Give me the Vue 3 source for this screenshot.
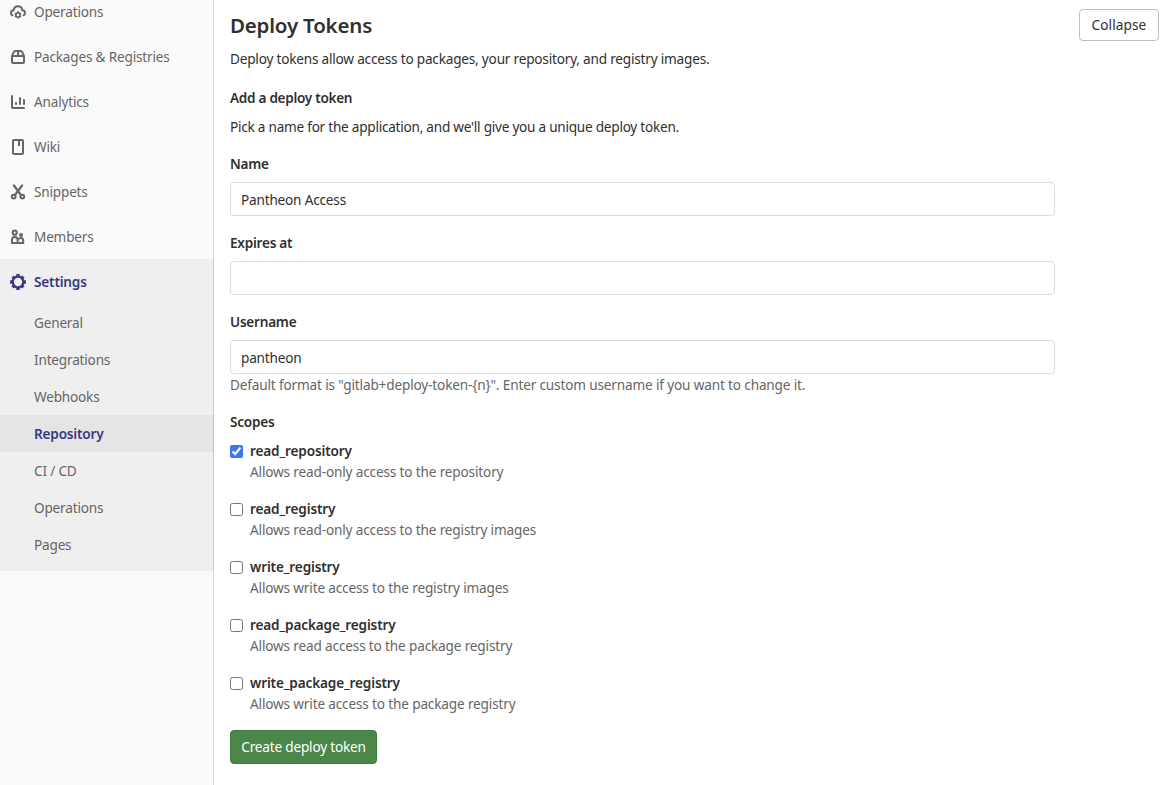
<script setup>
import { ref } from 'vue'

const navItems = [
  { label: 'Operations', icon: 'cloud' },
  { label: 'Packages & Registries', icon: 'package' },
  { label: 'Analytics', icon: 'chart' },
  { label: 'Wiki', icon: 'book' },
  { label: 'Snippets', icon: 'scissors' },
  { label: 'Members', icon: 'users' },
]
const subItems = ['General', 'Integrations', 'Webhooks', 'Repository', 'CI / CD', 'Operations', 'Pages']

const name = ref('Pantheon Access')
const expires = ref('')
const username = ref('pantheon')
const scopes = ref([
  { id: 'read_repository', help: 'Allows read-only access to the repository', checked: true },
  { id: 'read_registry', help: 'Allows read-only access to the registry images', checked: false },
  { id: 'write_registry', help: 'Allows write access to the registry images', checked: false },
  { id: 'read_package_registry', help: 'Allows read access to the package registry', checked: false },
  { id: 'write_package_registry', help: 'Allows write access to the package registry', checked: false },
])
</script>

<template>
  <div class="page">
    <nav class="sidebar">
      <a v-for="item in navItems" :key="item.label" class="nav-item">
        <svg class="icon" viewBox="0 0 16 16" fill="none" stroke="currentColor" stroke-width="2">
          <g v-if="item.icon === 'cloud'">
            <path stroke-linecap="round" d="M2.500 11.300C1.500 10.800 1 10 1 8.900c0-1.500 1.100-2.600 2.600-2.700C3.900 3.900 5.700 2.200 8 2.200s4.100 1.700 4.400 4c1.500.1 2.600 1.200 2.600 2.700 0 1.100-.5 1.900-1.500 2.400" />
            <circle cx="8" cy="10.900" r="2.100" stroke-width="1.700" />
            <path stroke-width="1.600" d="M8 7.300v1.500M8 13v1.500M4.900 9.100l1.300.7M9.800 12l1.300.7M11.100 9.100l-1.300.7M6.200 12l-1.300.7" />
          </g>
          <g v-else-if="item.icon === 'package'">
            <path stroke-linejoin="round" d="M2 7h12v6a1 1 0 0 1-1 1H3a1 1 0 0 1-1-1zM2 7l1.600-3.600Q4.200 2 5.600 2h4.800Q11.800 2 12.400 3.400L14 7M8 2v5" />
          </g>
          <path v-else-if="item.icon === 'chart'" stroke-linecap="round" d="M2 2v11a1 1 0 0 0 1 1h11M6 9v1M10 4v6M14 6v4" />
          <path v-else-if="item.icon === 'book'" d="M4 1h8a1 1 0 0 1 1 1v12a1 1 0 0 1-1 1H4a1 1 0 0 1-1-1V2a1 1 0 0 1 1-1zM9 1.500V7" />
          <g v-else-if="item.icon === 'scissors'">
            <circle cx="3.700" cy="12.600" r="1.900" />
            <circle cx="12.300" cy="12.600" r="1.900" />
            <path stroke-width="2.200" stroke-linecap="round" d="M3.900 1.500 11 11M12.100 1.500 5 11" />
          </g>
          <g v-else>
            <circle cx="4.700" cy="3.700" r="2.100" />
            <path d="M2 14v-3.200C2 9 3 7.900 4.700 7.900S7.600 9 7.600 10.800V14zM8 14h5.200v-2.500c0-1.500-.9-2.500-2.400-2.500-1.200 0-2.100.5-2.600 1.300" />
            <circle cx="11" cy="6" r="2" fill="currentColor" stroke="none" />
          </g>
        </svg>
        <span>{{ item.label }}</span>
      </a>
      <div class="section">
        <a class="nav-item current">
          <svg class="icon" viewBox="0 0 16 16" fill="none" stroke="currentColor">
            <circle cx="8" cy="8" r="5.300" stroke-width="2.300" />
            <path stroke-width="3.400" d="M8 .1v2.400M8 13.500v2.400M.1 8h2.400M13.500 8h2.400M2.600 2.600l1.500 1.500M11.900 11.900l1.500 1.500M2.600 13.400l1.500-1.500M11.900 4.100l1.500-1.500" />
          </svg>
          <span>Settings</span>
        </a>
        <a v-for="item in subItems" :key="item" class="sub-item" :class="{ selected: item === 'Repository' }">{{ item }}</a>
      </div>
    </nav>

    <main class="content">
      <header class="heading">
        <h4>Deploy Tokens</h4>
        <button class="collapse" type="button">Collapse</button>
      </header>
      <p class="intro">Deploy tokens allow access to packages, your repository, and registry images.</p>
      <h5>Add a deploy token</h5>
      <p class="hint">Pick a name for the application, and we'll give you a unique deploy token.</p>
      <form class="form">
        <div class="field">
          <label for="name">Name</label>
          <input id="name" v-model="name" class="text" type="text">
        </div>
        <div class="field">
          <label for="expires">Expires at</label>
          <input id="expires" v-model="expires" class="text" type="text">
        </div>
        <div class="field">
          <label for="username">Username</label>
          <input id="username" v-model="username" class="text" type="text">
          <div class="help">Default format is "gitlab+deploy-token-{n}". Enter custom username if you want to change it.</div>
        </div>
        <div class="scopes">
          <label>Scopes</label>
          <div v-for="scope in scopes" :key="scope.id" class="scope">
            <input :id="scope.id" v-model="scope.checked" class="check" type="checkbox">
            <div>
              <label :for="scope.id">{{ scope.id }}</label>
              <div class="help">{{ scope.help }}</div>
            </div>
          </div>
        </div>
        <button class="create" type="button">Create deploy token</button>
      </form>
    </main>
  </div>
</template>

<style>
body { background: #fff; overflow: hidden; }
</style>

<style scoped>
* { box-sizing: border-box; }
.page {
  display: flex;
  height: 785px;
  overflow: hidden;
  color: #303030;
  font: 13.6px/20px "Noto Sans", sans-serif;
  letter-spacing: -.19px;
}
.sidebar {
  width: 214px;
  height: 796px;
  flex: none;
  margin-top: -11px;
  background: #fafafa;
  box-shadow: inset -1px 0 0 #d6d6d6;
  color: #666;
}
.nav-item {
  display: flex;
  align-items: center;
  gap: 8px;
  height: 45px;
  padding-left: 10px;
}
.icon { width: 16px; height: 16px; flex: none; }
.section { padding-bottom: 8px; background: rgba(0, 0, 0, .043); }
.current, .selected { color: #393982; font-weight: 600; }
.sub-item { display: block; height: 37px; padding: 9px 0 0 34px; }
.selected { background: rgba(0, 0, 0, .04); }
.content { flex: 1; padding: 9px 6px 0 16px; }
.heading { display: flex; justify-content: space-between; height: 40px; }
h4 { margin: 3px 0 0; font-size: 20.500px; line-height: 26px; font-weight: 600; }
.collapse {
  width: 80px;
  height: 32px;
  padding: 0;
  border: 1px solid #bfbfbf;
  border-radius: 4px;
  background: #fff;
  color: #303030;
  font: inherit;
  letter-spacing: 0.1px;
}
.intro { margin: 0; letter-spacing: -.2px; }
h5 { margin: 19px 0 9px; font-size: 13.6px; line-height: 20px; font-weight: 600; letter-spacing: -.3px; }
.hint { margin: 0 0 17px; letter-spacing: -.245px; }
.form { width: 825px; }
label { display: block; font-weight: 600; letter-spacing: -.25px; }
.field { margin-bottom: 17px; }
.text {
  display: block;
  width: 100%;
  height: 34px;
  margin-top: 8px;
  padding: 1px 10px 0;
  border: 1px solid #dbdbdb;
  border-radius: 4px;
  outline: none;
  background: #fff;
  color: #303030;
  font: inherit;
  letter-spacing: -.19px;
}
.help { color: #666; margin-top: 1px; letter-spacing: -.155px; }
.scopes { display: flex; flex-direction: column; }
.scopes > label { margin-bottom: 9px; }
.scope { display: flex; gap: 7px; height: 58px; }
.scope label { letter-spacing: -.15px; }
.check { width: 13px; height: 13px; margin: 4px 0 0; accent-color: #3b76f6; }
.create {
  width: 147px;
  height: 34px;
  margin-top: -1px;
  padding: 0;
  border: 1px solid #3b7d3b;
  border-radius: 4px;
  background: #4b874b;
  color: #fff;
  font: inherit;
  letter-spacing: -.19px;
}
</style>
